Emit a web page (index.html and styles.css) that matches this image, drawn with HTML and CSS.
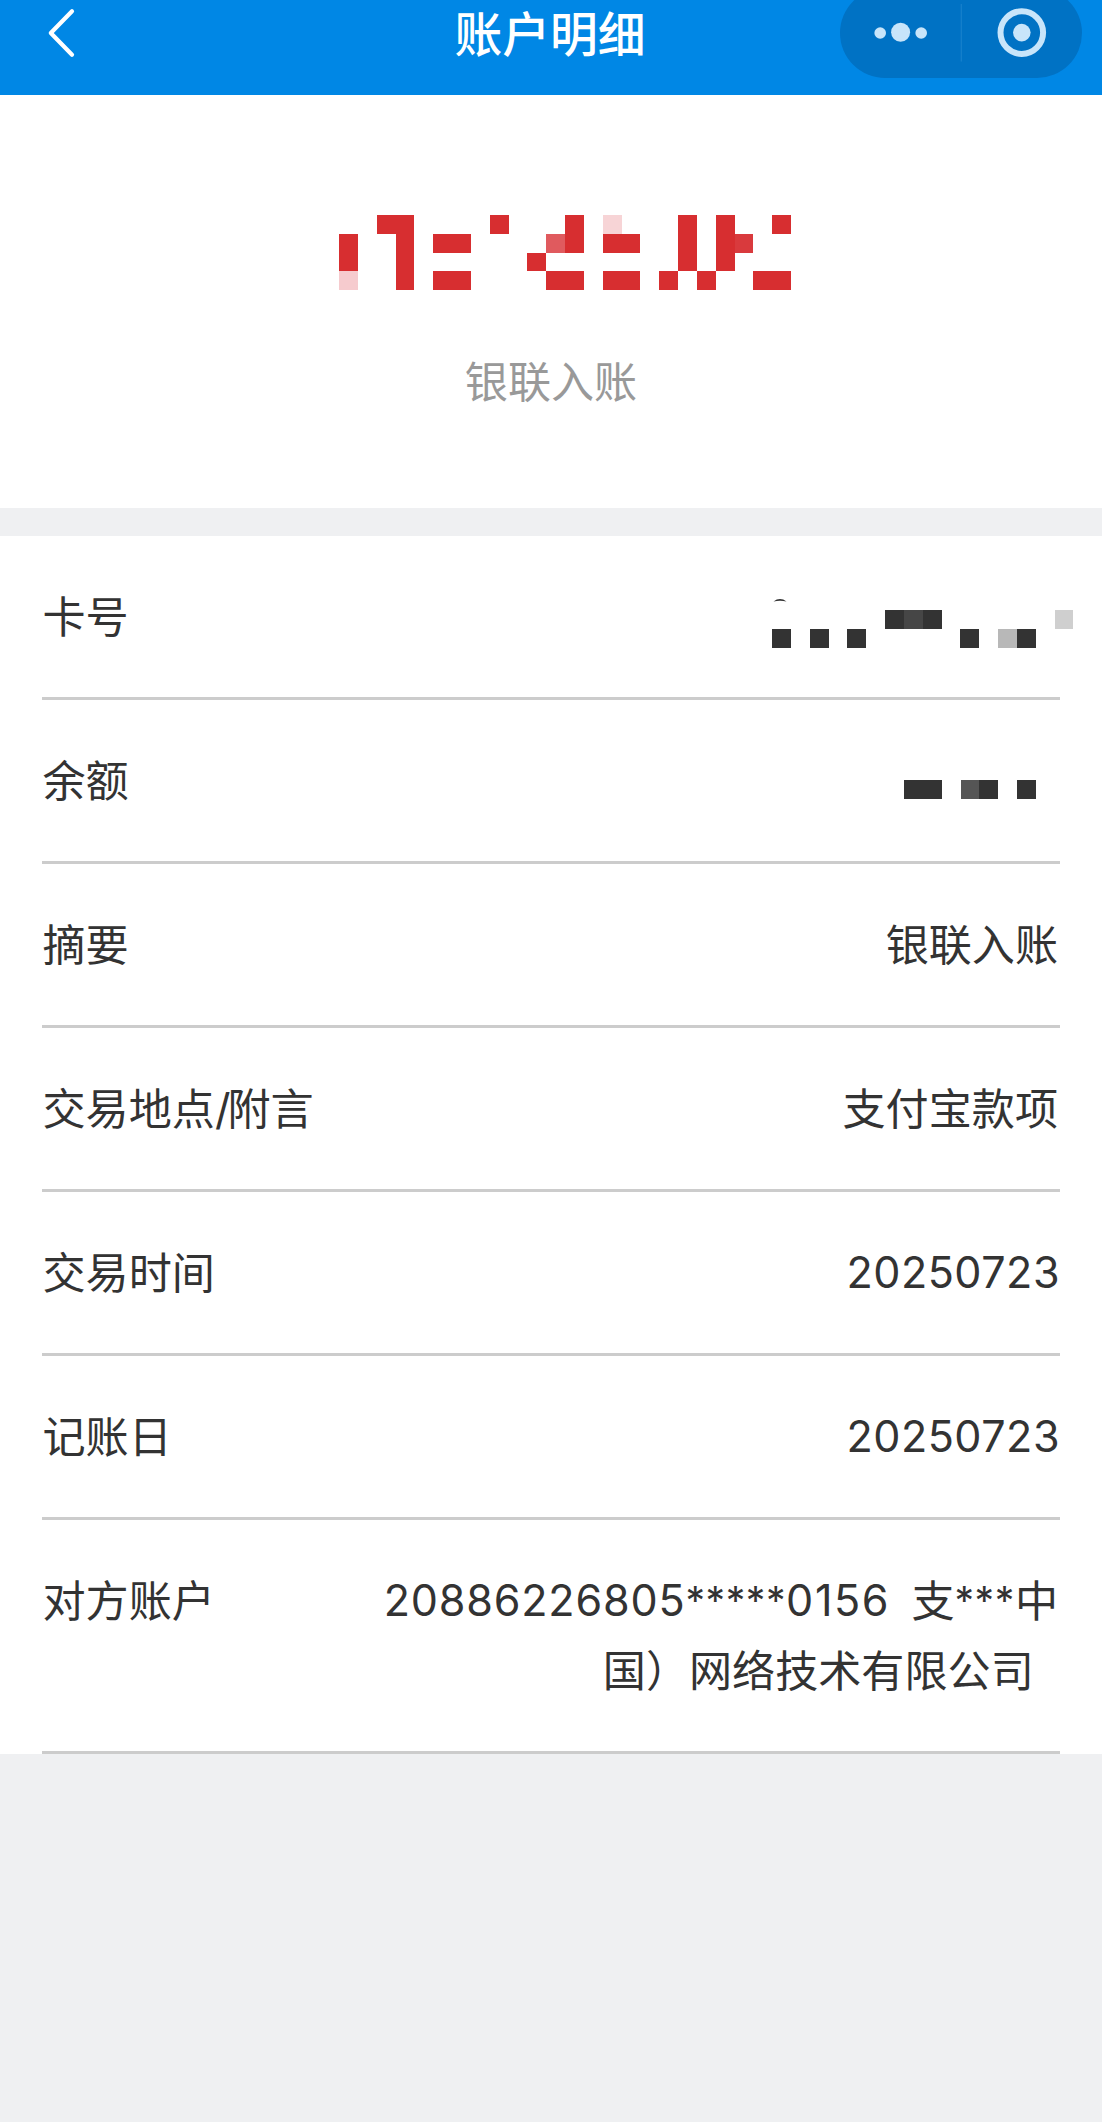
FILE: index.html
```html
<!DOCTYPE html>
<html lang="zh-CN">
<head>
<meta charset="utf-8">
<title>账户明细</title>
<link rel="stylesheet" href="styles.css">
</head>
<body>
<header class="navbar">
  <svg class="back" width="36" height="60" viewBox="0 0 36 60" fill="none" stroke="#fff" stroke-width="4.2" stroke-linecap="round" stroke-linejoin="round"><path d="M30 11.2 8.800 33 30 54.8"/></svg>
  <h1 class="title">账户明细</h1>
  <svg class="capsule" width="242" height="78" viewBox="0 0 242 78">
    <rect x="0" y="-12" width="242" height="90" rx="45" fill="#0072c4"/>
    <path d="M121.3 4v57.500" stroke="#1680cc" stroke-width="1.300"/>
    <g fill="#c8e5fa"><circle cx="40.200" cy="33" r="5.800"/><circle cx="60.600" cy="32.300" r="9.500"/><circle cx="81.200" cy="33" r="5.800"/><circle cx="181.800" cy="32.600" r="8.800"/></g>
    <circle cx="181.800" cy="32.600" r="21.300" fill="none" stroke="#c8e5fa" stroke-width="6"/>
  </svg>
</header>
<section class="summary">
  <svg class="amount" width="452" height="75.300" viewBox="0 0 24 4" preserveAspectRatio="none" shape-rendering="crispEdges">
    <path fill="#d72e30" d="M0 1h1v2H0zM2 0h2v4H3V1H2zM5 1h2v1H5zM5 3h2v1H5zM8 0h1v1H8zM12 0h1v2h-1zM10 2h1v1h-1zM11 3h2v1h-2zM14 1h2v1h-2zM14 3h2v1h-2zM17 3h1v1h-1zM18 0h1v3h-1zM19 3h1v1h-1zM20 0h1v3h-1zM23 0h1v1h-1zM22 3h2v1h-2z"/>
    <path fill="#f6cbce" d="M0 3h1v1H0z"/>
    <path fill="#e05a5e" d="M11 1h1v1h-1z"/>
    <path fill="#f7d4d6" d="M14 0h1v1h-1z"/>
    <path fill="#d93a3d" d="M21 1h1v1h-1z"/>
  </svg>
  <p class="kind">银联入账</p>
</section>
<main class="details">
  <div class="row"><span class="label">卡号</span>
    <svg class="mask card-mask" width="302" height="50" viewBox="0 0 302 50">
      <path fill="#333" d="M1.500 2.500Q8-2.300 14.500 2.500Q8 .8 1.500 2.500z"/>
      <g transform="translate(0 11) scale(18.840)" shape-rendering="crispEdges">
        <path fill="#333" d="M0 1h1v1H0zM2 1h1v1H2zM4 1h1v1H4zM6 0h1v1H6zM8 0h1v1H8zM10 1h1v1h-1zM13 1h1v1h-1z"/>
        <path fill="#464646" d="M7 0h1v1H7z"/><path fill="#b8b8b8" d="M12 1h1v1h-1z"/><path fill="#cfcfcf" d="M15 0h1v1h-1z"/>
      </g>
    </svg>
  </div>
  <div class="row"><span class="label">余额</span>
    <svg class="mask balance-mask" width="132" height="19" viewBox="0 0 7 1" preserveAspectRatio="none" shape-rendering="crispEdges"><path fill="#333" d="M0 0h2v1H0zM4 0h1v1H4zM6 0h1v1H6z"/><path fill="#555" d="M3 0h1v1H3z"/></svg>
  </div>
  <div class="row"><span class="label">摘要</span><span class="value">银联入账</span></div>
  <div class="row"><span class="label">交易地点<span class="slash">/</span>附言</span><span class="value">支付宝款项</span></div>
  <div class="row"><span class="label">交易时间</span><span class="value number">20250723</span></div>
  <div class="row"><span class="label">记账日</span><span class="value number">20250723</span></div>
  <div class="row"><span class="label">对方账户</span><span class="value"><span class="digits">20886226805</span><span class="stars">*****</span><span class="digits tail">0156</span><span class="gap">&nbsp; </span>支<span class="stars">***</span>中<br>国）网络技术有限公司&nbsp;&nbsp;</span></div>
</main>
</body>
</html>
```
FILE: styles.css
```css
* { box-sizing: border-box; }
body {
  margin: 0;
  min-height: 2122px;
  background: #eff0f2;
  color: #333;
  font-family: Inter, "Noto Sans CJK SC", sans-serif;
  font-size: 43.1px;
  line-height: 70px;
}
.navbar {
  height: 95px;
  padding: 0 20px 0 42px;
  background: #0087e5;
  display: grid;
  grid-template-columns: 242px 1fr 242px;
  align-items: start;
}
.back { display: block; }
.title {
  margin: 0;
  padding-right: 24px;
  color: #fff;
  font-size: 47.8px;
  font-weight: 500;
  text-align: center;
}
.capsule { display: block; }
.summary {
  height: 413px;
  padding-top: 120px;
  background: #fff;
  display: flex;
  flex-direction: column;
  align-items: center;
}
.amount { margin-left: 28px; flex: none; }
.kind { margin: 57px 0 0; color: #999; }
.details { margin-top: 28px; padding: 0 42px; background: #fff; }
.row {
  height: 164px;
  padding: 46px 0 45px;
  border-bottom: 3px solid #ccc;
  display: flex;
  justify-content: space-between;
  align-items: flex-start;
}
.row:last-child { height: 234px; }
.label { padding-left: 0.5px; }
.value { padding-right: 2px; text-align: right; white-space: nowrap; }
.number { margin-top: -1px; padding-right: 0; letter-spacing: 0.5px; }
.digits { letter-spacing: 0.8px; line-height: 1; vertical-align: 1px; }
.tail { letter-spacing: 1.6px; }
.stars { font-size: 39px; letter-spacing: 0.6px; line-height: 1; vertical-align: 2px; }
.slash { letter-spacing: -3px; }
.gap { letter-spacing: -1.5px; }
.mask { flex: none; }
.card-mask { margin: 17px -14px 0 0; }
.balance-mask { margin: 34px 24px 0 0; }
```
